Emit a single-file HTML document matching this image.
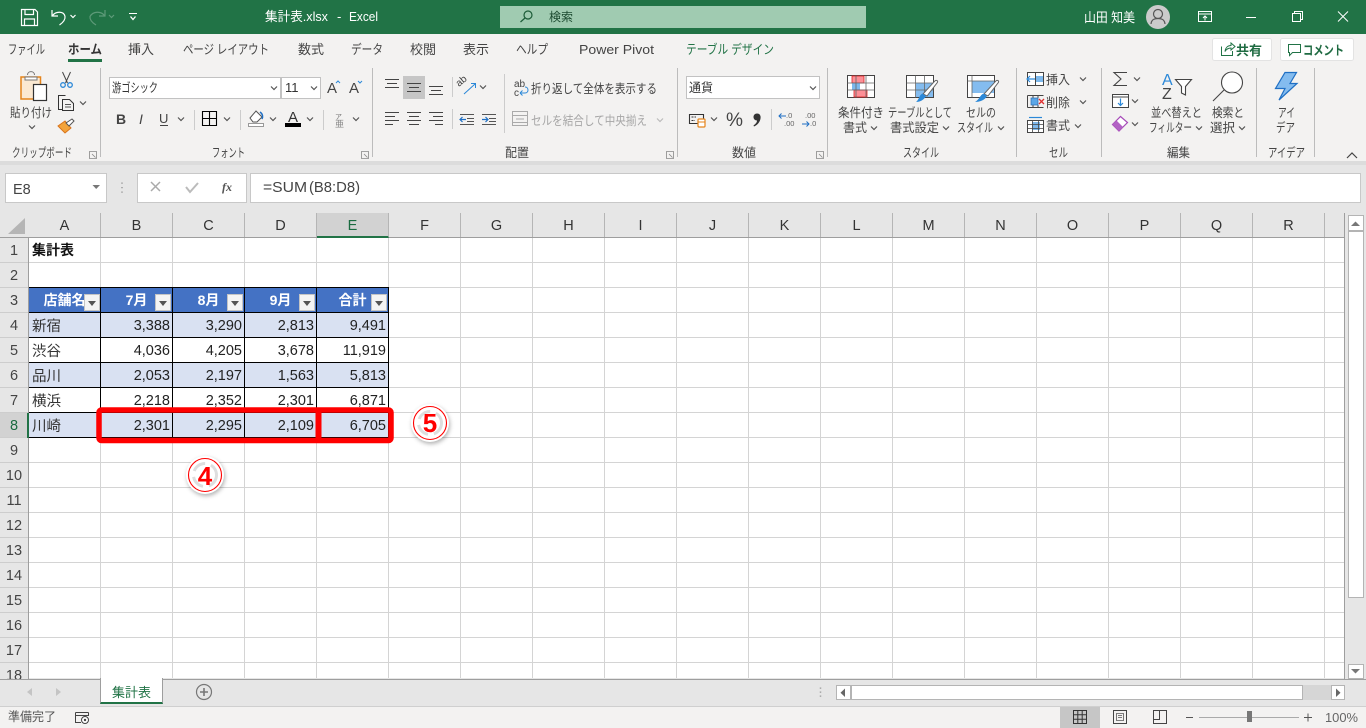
<!DOCTYPE html>
<html lang="ja">
<head>
<meta charset="utf-8">
<title>集計表.xlsx - Excel</title>
<style>
html,body{margin:0;padding:0;width:1366px;height:728px;overflow:hidden;background:#e6e6e6;font-family:"Liberation Sans","Noto Sans CJK JP",sans-serif}
#title{position:absolute;left:0;top:0;width:1366px;height:34px;background:#217346}
#ribbon{position:absolute;left:0;top:34px;width:1366px;height:127px;background:#f3f2f1}
#shade{position:absolute;left:0;top:161px;width:1366px;height:4px;background:#dcdcdc}
#sheetbg{position:absolute;left:29px;top:238px;width:1315px;height:440px;background-color:#fff;background-image:linear-gradient(to right,transparent 71px,#d4d4d4 71px),linear-gradient(to bottom,transparent 24px,#d4d4d4 24px);background-size:72px 100%,100% 25px}
#tabs{position:absolute;left:0;top:679px;width:1366px;height:27px;background:#e6e6e6;border-top:1px solid #9e9e9e;box-sizing:border-box}
#status{position:absolute;left:0;top:706px;width:1366px;height:22px;background:#f3f2f1;border-top:1px solid #cfcfcf;box-sizing:border-box}
.box{position:absolute;background:#fff;border:1px solid #c8c8c8;box-sizing:border-box}
.c{position:absolute;box-sizing:border-box;height:24px;line-height:26px;font-size:14.5px;color:#222;white-space:nowrap;overflow:hidden;width:71px}
.n{text-align:right;padding-right:2px}
.j{padding-left:3px;line-height:28px;color:#333}
.band{background:#d9e1f2}
.h{background:#4472c4;color:#fff;font-weight:bold;text-align:center;font-size:14px;line-height:24px}
.f{position:absolute;width:16px;height:17px;background:#f4f4f4;border:1px solid #c4c4c4;box-sizing:border-box}
.f:after{content:"";position:absolute;left:3px;top:6px;border:4px solid transparent;border-top:5px solid #555;border-bottom:0}
.ch{position:absolute;top:213px;height:24px;line-height:26px;width:72px;text-align:center;font-size:14.5px;color:#333;box-sizing:border-box;border-right:1px solid #b5b5b5}
.rh{position:absolute;left:0;width:28px;height:25px;line-height:26px;text-align:center;font-size:14.5px;color:#444;box-sizing:border-box;border-bottom:1px solid #cdcdcd}
svg{position:absolute;left:0;top:0;overflow:visible}
svg text{font-family:"Liberation Sans","Noto Sans CJK JP",sans-serif;font-size:12.5px;fill:#444}
svg text.t{font-size:13px}
</style>
</head>
<body>
<div id="title"></div>
<div id="ribbon"></div>
<div id="shade"></div>

<!-- name + formula -->
<div class="box" style="left:5px;top:173px;width:102px;height:30px"></div>
<div class="box" style="left:137px;top:173px;width:110px;height:30px"></div>
<div class="box" style="left:250px;top:173px;width:1111px;height:30px"></div>

<!-- column headers -->
<div style="position:absolute;left:0;top:213px;width:1345px;height:25px;background:#e6e6e6;border-bottom:1px solid #9e9e9e;box-sizing:border-box"></div>
<div class="ch" style="left:29px">A</div><div class="ch" style="left:101px">B</div><div class="ch" style="left:173px">C</div><div class="ch" style="left:245px">D</div>
<div class="ch" style="left:317px;background:#d2d2d2;color:#1a6b40;border-bottom:2px solid #217346;height:25px">E</div>
<div class="ch" style="left:389px">F</div><div class="ch" style="left:461px">G</div><div class="ch" style="left:533px">H</div><div class="ch" style="left:605px">I</div><div class="ch" style="left:677px">J</div><div class="ch" style="left:749px">K</div><div class="ch" style="left:821px">L</div><div class="ch" style="left:893px">M</div><div class="ch" style="left:965px">N</div><div class="ch" style="left:1037px">O</div><div class="ch" style="left:1109px">P</div><div class="ch" style="left:1181px">Q</div><div class="ch" style="left:1253px">R</div>

<!-- row headers -->
<div style="position:absolute;left:0;top:238px;width:29px;height:441px;background:#e6e6e6;border-right:1px solid #9e9e9e;box-sizing:border-box;overflow:hidden">
<div class="rh" style="top:0">1</div><div class="rh" style="top:25px">2</div><div class="rh" style="top:50px">3</div><div class="rh" style="top:75px">4</div><div class="rh" style="top:100px">5</div><div class="rh" style="top:125px">6</div><div class="rh" style="top:150px">7</div>
<div class="rh" style="top:175px;background:#d2d2d2;color:#1a6b40">8</div>
<div class="rh" style="top:200px">9</div><div class="rh" style="top:225px">10</div><div class="rh" style="top:250px">11</div><div class="rh" style="top:275px">12</div><div class="rh" style="top:300px">13</div><div class="rh" style="top:325px">14</div><div class="rh" style="top:350px">15</div><div class="rh" style="top:375px">16</div><div class="rh" style="top:400px">17</div><div class="rh" style="top:425px">18</div>
</div>
<div style="position:absolute;left:27px;top:413px;width:2px;height:25px;background:#217346"></div>

<!-- sheet -->
<div id="sheetbg"></div>
<div class="c j" style="left:29px;top:238px;font-weight:bold;font-size:14px;padding-left:3px;line-height:24px;color:#111">集計表</div>

<div class="c h" style="left:29px;top:288px">店舗名</div>
<div class="c h" style="left:101px;top:288px">7月</div>
<div class="c h" style="left:173px;top:288px">8月</div>
<div class="c h" style="left:245px;top:288px">9月</div>
<div class="c h" style="left:317px;top:288px">合計</div>

<div class="c j band" style="left:29px;top:313px">新宿</div><div class="c n band" style="left:101px;top:313px">3,388</div><div class="c n band" style="left:173px;top:313px">3,290</div><div class="c n band" style="left:245px;top:313px">2,813</div><div class="c n band" style="left:317px;top:313px">9,491</div>
<div class="c j" style="left:29px;top:338px;background:#fff">渋谷</div><div class="c n" style="left:101px;top:338px;background:#fff">4,036</div><div class="c n" style="left:173px;top:338px;background:#fff">4,205</div><div class="c n" style="left:245px;top:338px;background:#fff">3,678</div><div class="c n" style="left:317px;top:338px;background:#fff">11,919</div>
<div class="c j band" style="left:29px;top:363px">品川</div><div class="c n band" style="left:101px;top:363px">2,053</div><div class="c n band" style="left:173px;top:363px">2,197</div><div class="c n band" style="left:245px;top:363px">1,563</div><div class="c n band" style="left:317px;top:363px">5,813</div>
<div class="c j" style="left:29px;top:388px;background:#fff">横浜</div><div class="c n" style="left:101px;top:388px;background:#fff">2,218</div><div class="c n" style="left:173px;top:388px;background:#fff">2,352</div><div class="c n" style="left:245px;top:388px;background:#fff">2,301</div><div class="c n" style="left:317px;top:388px;background:#fff">6,871</div>
<div class="c j band" style="left:29px;top:413px">川崎</div><div class="c n band" style="left:101px;top:413px">2,301</div><div class="c n band" style="left:173px;top:413px">2,295</div><div class="c n band" style="left:245px;top:413px">2,109</div><div class="c n band" style="left:317px;top:413px">6,705</div>

<!-- table borders -->
<svg width="1366" height="728" viewBox="0 0 1366 728">
<path d="M29 287.5H389M29 312.5H389M29 337.5H389M29 362.5H389M29 387.5H389M29 412.5H389M29 437.5H389M100.500 287V438M172.500 287V438M244.500 287V438M316.500 287V438M388.500 287V438" fill="none" stroke="#000" stroke-width="1"/>
</svg>
<div class="f" style="left:84px;top:294px"></div>
<div class="f" style="left:155px;top:294px"></div>
<div class="f" style="left:227px;top:294px"></div>
<div class="f" style="left:299px;top:294px"></div>
<div class="f" style="left:371px;top:294px"></div>

<!-- scrollbars and bottom bars -->
<div style="position:absolute;left:1344px;top:213px;width:1px;height:466px;background:#9e9e9e"></div>
<div style="position:absolute;left:1345px;top:213px;width:21px;height:466px;background:#e6e6e6"></div>
<div class="box" style="left:1348px;top:215px;width:16px;height:16px;border-color:#b4b4b4"></div>
<div class="box" style="left:1348px;top:231px;width:16px;height:367px;border-color:#b4b4b4"></div>
<div class="box" style="left:1348px;top:664px;width:16px;height:15px;border-color:#b4b4b4"></div>
<div id="tabs"></div>
<div style="position:absolute;left:100px;top:678px;width:63px;height:26px;background:#fff;border:1px solid #9e9e9e;border-top:0;border-bottom:2px solid #217346;box-sizing:border-box"></div>
<div style="position:absolute;left:836px;top:685px;width:509px;height:15px;background:#d6d6d6"></div>
<div class="box" style="left:836px;top:685px;width:15px;height:15px;border-color:#b4b4b4"></div>
<div class="box" style="left:851px;top:685px;width:452px;height:15px;border-color:#b4b4b4"></div>
<div class="box" style="left:1331px;top:685px;width:14px;height:15px;border-color:#b4b4b4"></div>
<div id="status"></div>
<div style="position:absolute;left:1060px;top:707px;width:40px;height:21px;background:#c6c6c6"></div>

<!-- chrome icons + text -->
<svg width="1366" height="728" viewBox="0 0 1366 728">
<defs>
<path id="cv" d="M-3-1.500 0 1.500 3-1.500" fill="none" stroke="#555" stroke-width="1.200"/>
</defs>

<!-- title bar -->
<g fill="none" stroke="#fff" stroke-width="1.200">
<path d="M21.500 9.500H35L37.500 12V25.500H21.500Z"/><path d="M25 9.500V14.500H33.500V9.500M24.500 25.500V19H34.500V25.500"/>
<path d="M52 10V16H58M52.500 15.500C56 11 64 11 65 16.500C65.500 20 63 22.500 59.500 25"/>
<path d="M70.500 15 73 17.500 75.500 15"/>
</g>
<g fill="none" stroke="#5e9a79" stroke-width="1.200">
<path d="M105 10V16H99M104.500 15.500C101 11 93 11 90 16.500C89.500 20 92 22.500 96 25"/>
<path d="M109 15 111.500 17.500 114 15"/>
</g>
<path d="M129 13.500H137" stroke="#fff" fill="none"/><path d="M130.500 16.500 133 19.500 135.500 16.500" stroke="#fff" stroke-width="1.300" fill="none"/>
<text x="265" y="21" style="fill:#fff;font-size:13px" textLength="63" lengthAdjust="spacingAndGlyphs">集計表.xlsx</text>
<text x="337" y="21" style="fill:#fff;font-size:13px">-</text>
<text x="349" y="21" style="fill:#fff;font-size:13px" textLength="29" lengthAdjust="spacingAndGlyphs">Excel</text>
<rect x="500" y="6" width="366" height="22" fill="#a0cbb1"/>
<circle cx="528" cy="15" r="4" fill="none" stroke="#1c5c38" stroke-width="1.200"/><path d="M525 18 520.500 22" stroke="#1c5c38" stroke-width="1.200"/>
<text x="549" y="21" style="fill:#1c4a30;font-size:12px">検索</text>
<text x="1084" y="22" style="fill:#fff;font-size:13px" textLength="51" lengthAdjust="spacingAndGlyphs">山田 知美</text>
<circle cx="1158" cy="17" r="12" fill="#cbcbcb"/>
<circle cx="1158" cy="14" r="4.500" fill="none" stroke="#555" stroke-width="1.200"/><path d="M1151 24C1151.500 19 1155 18.500 1158 18.500S1164.500 19 1165 24" fill="none" stroke="#555" stroke-width="1.200"/>
<g fill="none" stroke="#fff" stroke-width="1">
<path d="M1198.500 11.500H1211.500V21.500H1198.500ZM1198.500 14H1211.500M1205 20.500V16M1203 18 1205 16 1207 18"/>
<path d="M1246 17.500H1256"/>
<path d="M1292.500 13.500H1300.500V21.500H1292.500ZM1294.500 13.500V11.500H1302.500V19.500H1300.500"/>
<path d="M1338 11.500 1348 21.500M1348 11.500 1338 21.500"/>
</g>

<!-- ribbon tabs -->
<text class="t" x="8" y="54" textLength="37" lengthAdjust="spacingAndGlyphs">ファイル</text>
<text class="t" x="68" y="54" textLength="34" lengthAdjust="spacingAndGlyphs" style="font-weight:bold;fill:#333">ホーム</text>
<rect x="68" y="59" width="34" height="3" fill="#217346"/>
<text class="t" x="128" y="54" textLength="26" lengthAdjust="spacingAndGlyphs">挿入</text>
<text class="t" x="183" y="54" textLength="86" lengthAdjust="spacingAndGlyphs">ページ レイアウト</text>
<text class="t" x="298" y="54" textLength="26" lengthAdjust="spacingAndGlyphs">数式</text>
<text class="t" x="351" y="54" textLength="32" lengthAdjust="spacingAndGlyphs">データ</text>
<text class="t" x="410" y="54" textLength="26" lengthAdjust="spacingAndGlyphs">校閲</text>
<text class="t" x="463" y="54" textLength="26" lengthAdjust="spacingAndGlyphs">表示</text>
<text class="t" x="516" y="54" textLength="32" lengthAdjust="spacingAndGlyphs">ヘルプ</text>
<text class="t" x="579" y="54" textLength="75" lengthAdjust="spacingAndGlyphs">Power Pivot</text>
<text class="t" x="686" y="54" style="fill:#217346" textLength="88" lengthAdjust="spacingAndGlyphs">テーブル デザイン</text>

<!-- share/comment -->
<rect x="1212.500" y="38.500" width="59" height="22" rx="2" fill="#fff" stroke="#e3e3e3"/>
<path d="M1221.500 46.500V55.500H1232.500V51M1225 51.500C1225.500 47.500 1228 45.500 1231 45.500V43L1235 46.500 1231 50V48C1228.500 48 1226.500 49 1225 51.500Z" fill="none" stroke="#217346"/>
<text x="1236" y="55" textLength="26" lengthAdjust="spacingAndGlyphs" style="font-weight:bold;fill:#1f6b42;font-size:13px">共有</text>
<rect x="1280.500" y="38.500" width="73" height="22" rx="2" fill="#fff" stroke="#e3e3e3"/>
<path d="M1288.500 44.500H1300.500V52.500H1292.500L1289.500 55.500V52.500H1288.500Z" fill="none" stroke="#217346"/>
<text x="1303" y="55" textLength="41" lengthAdjust="spacingAndGlyphs" style="font-weight:bold;fill:#1f6b42;font-size:13px">コメント</text>

<!-- group dividers -->
<path d="M100.500 68V157M372.500 68V157M677.500 68V157M827.500 68V157M1016.500 68V157M1101.500 68V157M1256.500 68V157M1314.500 68V157" stroke="#bcbcbc"/>

<!-- group labels -->
<text x="12" y="157" textLength="60" lengthAdjust="spacingAndGlyphs">クリップボード</text>
<text x="212" y="157" textLength="33" lengthAdjust="spacingAndGlyphs">フォント</text>
<text x="505" y="157" textLength="24" lengthAdjust="spacingAndGlyphs">配置</text>
<text x="732" y="157" textLength="24" lengthAdjust="spacingAndGlyphs">数値</text>
<text x="903" y="157" textLength="36" lengthAdjust="spacingAndGlyphs">スタイル</text>
<text x="1049" y="157" textLength="19" lengthAdjust="spacingAndGlyphs">セル</text>
<text x="1167" y="157" textLength="23" lengthAdjust="spacingAndGlyphs">編集</text>
<text x="1268" y="157" textLength="37" lengthAdjust="spacingAndGlyphs">アイデア</text>
<g fill="none" stroke="#888" stroke-width=".8">
<path d="M89.500 151.500H96.500V158.500H89.500ZM92 154 95.500 157.500"/>
<path d="M361.500 151.500H368.500V158.500H361.500ZM364 154 367.500 157.500"/>
<path d="M666.500 151.500H673.500V158.500H666.500ZM669 154 672.500 157.500"/>
<path d="M816.500 151.500H823.500V158.500H816.500ZM819 154 822.500 157.500"/>
</g>
<path d="M1347 158 1352 153 1357 158" fill="none" stroke="#444" stroke-width="1.200"/>

<!-- clipboard -->
<path d="M21 77H40.500V99H21Z" fill="#fbe9d2" stroke="#e5841b" stroke-width="1.500"/>
<path d="M25 77H37V80H25Z" fill="#fff" stroke="#777"/><path d="M27.500 75C27.500 70.500 34.500 70.500 34.500 75" fill="#f3f2f1" stroke="#777"/>
<rect x="33.500" y="84.500" width="13" height="16" fill="#fff" stroke="#333" stroke-width="1.200"/>
<text x="10" y="117" textLength="42" lengthAdjust="spacingAndGlyphs">貼り付け</text>
<use href="#cv" x="32" y="127"/>
<!-- cut -->
<path d="M62.500 72 67.500 83M70.500 72 65.500 83" stroke="#444" fill="none"/>
<circle cx="63" cy="85" r="2.300" fill="none" stroke="#2b88d8" stroke-width="1.300"/><circle cx="70" cy="85" r="2.300" fill="none" stroke="#2b88d8" stroke-width="1.300"/>
<!-- copy -->
<path d="M61.500 95.500H65.500M61.500 95.500H58.500V109.500H62" fill="none" stroke="#333"/>
<path d="M62.500 99.500H69.500L73.500 103.500V110.500H62.500Z" fill="#f3f2f1" stroke="#333"/><path d="M65 104.500H71M65 107H71" stroke="#555"/>
<use href="#cv" x="83" y="103"/>
<!-- brush -->
<path d="M58 126 65 121 71 128 65 133Z" fill="#f3a33a" stroke="#d9731a"/>
<path d="M66 123 72 119 74 121 69 126Z" fill="#fff" stroke="#555"/>

<!-- font -->
<rect x="109.500" y="77.500" width="171" height="21" fill="#fff" stroke="#c2c2c2"/>
<rect x="281.500" y="77.500" width="39" height="21" fill="#fff" stroke="#c2c2c2"/>
<text x="112" y="92" textLength="46" lengthAdjust="spacingAndGlyphs" style="fill:#333">游ゴシック</text>
<text x="285" y="92" style="font-size:13px;fill:#333">11</text>
<use href="#cv" x="274" y="88"/><use href="#cv" x="314" y="88"/>
<text x="327" y="93" style="font-size:15px">A</text><path d="M336 83 338 81 340 83" fill="none" stroke="#2b88d8"/>
<text x="349" y="93" style="font-size:15px">A</text><path d="M358 81 360 83 362 81" fill="none" stroke="#2b88d8"/>
<text x="116" y="124" style="font-weight:bold;font-size:14px">B</text>
<text x="139" y="124" style="font-style:italic;font-size:14px">I</text>
<text x="159" y="123" style="font-size:13px">U</text><path d="M160 125.500H168" stroke="#444"/>
<use href="#cv" x="181" y="119"/>
<path d="M194.500 110V130M240.500 110V130M323.500 110V130" stroke="#ccc"/>
<path d="M202.500 111.500H216.500V125.500H202.500ZM209.500 111.500V125.500M202.500 118.500H216.500" fill="none" stroke="#000" stroke-width="1.100"/>
<use href="#cv" x="227" y="119"/>
<path d="M250 118 256 111 262 117 257 122H253Z" fill="#fff" stroke="#555"/><path d="M260 112C263 114 263 117 262 119" fill="none" stroke="#1f6fc4" stroke-width="1.500"/>
<rect x="248.500" y="123.500" width="15" height="3" fill="#fff" stroke="#999"/>
<use href="#cv" x="273" y="119"/>
<text x="293" y="122" text-anchor="middle" style="font-size:15px;fill:#333">A</text>
<rect x="285" y="123" width="16" height="4" fill="#000"/>
<use href="#cv" x="310" y="119"/>
<text x="335" y="119" style="font-size:7px;fill:#777">ア</text><text x="335" y="127" style="font-size:9px;fill:#888">亜</text>
<use href="#cv" x="356" y="119"/>

<!-- alignment -->
<rect x="403" y="76" width="22" height="23" fill="#c6c6c6"/>
<g stroke="#444" fill="none">
<path d="M385 79.500H399M387 83.500H397M385 87.500H399"/>
<path d="M407 83.500H421M409 87.500H419M407 91.500H421"/>
<path d="M429 86.500H443M431 90.500H441M429 94.500H443"/>
<path d="M385 112.500H399M385 116.500H395M385 120.500H399M385 124.500H393"/>
<path d="M407 112.500H421M409 116.500H419M407 120.500H421M409 124.500H419"/>
<path d="M429 112.500H443M433 116.500H443M429 120.500H443M435 124.500H443"/>
<path d="M460 114.500H474M467 118.500H474M467 121.500H474M460 124.500H474" stroke="#555"/>
<path d="M482 114.500H496M489 118.500H496M489 121.500H496M482 124.500H496" stroke="#555"/>
</g>
<path d="M452.500 77V97M452.500 109V129M504.500 74V133" stroke="#ccc"/>
<text x="459" y="87" transform="rotate(-40 459 87)" style="font-size:10px">ab</text>
<path d="M464 94 475 84M471 83.500H475.500V88" stroke="#2b88d8" fill="none"/>
<use href="#cv" x="483" y="87"/>
<path d="M460 119.500H466M462.500 117 460 119.500 462.500 122M482 119.500H488M485.500 117 488 119.500 485.500 122" stroke="#1f6fc4" fill="none" stroke-width="1.200"/>
<text x="514" y="87" style="font-size:10px">ab</text><text x="514" y="96" style="font-size:10px">c</text>
<path d="M520 93H525C529 93 529 87 525 87M520 93 522.500 90.500M520 93 522.500 95.500" fill="none" stroke="#2b88d8"/>
<text x="531" y="93" textLength="126" lengthAdjust="spacingAndGlyphs">折り返して全体を表示する</text>
<path d="M512.500 111.500H527.500V125.500H512.500ZM512.500 115.500H527.500M512.500 122.500H527.500M516 119H524" fill="none" stroke="#aaa"/>
<text x="531" y="125" textLength="116" lengthAdjust="spacingAndGlyphs" style="fill:#a6a6a6">セルを結合して中央揃え</text>
<path d="M657 118.500 660 121.500 663 118.500" fill="none" stroke="#bbb" stroke-width="1.200"/>

<!-- number -->
<rect x="686.500" y="76.500" width="133" height="22" fill="#fff" stroke="#c2c2c2"/>
<text x="689" y="92" textLength="24" lengthAdjust="spacingAndGlyphs" style="fill:#333">通貨</text>
<use href="#cv" x="813" y="88"/>
<path d="M689.500 114.500H703.500V123.500H689.500Z" fill="none" stroke="#333" stroke-width="1.100"/>
<path d="M691.500 117H696M691.500 120.500H695" stroke="#333" stroke-width="1" fill="none" stroke-dasharray="2 1"/>
<rect x="698" y="119" width="7" height="8" rx="1" fill="#fff" stroke="#e5841b" stroke-width="1.200"/>
<path d="M698 122H705" stroke="#e5841b"/>
<use href="#cv" x="714" y="119"/>
<text x="726" y="126" style="font-size:19px;fill:#444" textLength="17" lengthAdjust="spacingAndGlyphs">%</text>
<path d="M757 113.500C760 113.500 761 116 760.500 118.500C760 122 757.500 125 754 126.500L753.500 125.500C755.500 124 757 122.500 757 120.500C755 120.500 753.500 119 753.500 117C753.500 115 755 113.500 757 113.500Z" fill="#333"/>
<path d="M771.500 109V130" stroke="#ccc"/>
<text x="786" y="118" style="font-size:7.500px;fill:#666">.0</text><text x="784" y="126" style="font-size:7.500px;fill:#666">.00</text>
<path d="M779 116H786M781.500 113.500 779 116 781.500 118.500" fill="none" stroke="#1f6fc4"/>
<text x="805" y="118" style="font-size:7.500px;fill:#666">.00</text><text x="810" y="126" style="font-size:7.500px;fill:#666">.0</text>
<path d="M802 124H809M806.500 121.500 809 124 806.500 126.500" fill="none" stroke="#1f6fc4"/>

<!-- conditional formatting -->
<path d="M847.500 75.500H874.500V97.500H847.500Z" fill="#fff" stroke="#444"/>
<rect x="852" y="76" width="12" height="7" fill="#fd8f96" stroke="#d22" stroke-width=".8"/>
<rect x="852" y="83" width="8" height="7" fill="#7db8ec"/>
<rect x="854" y="90" width="13" height="7" fill="#fd8f96" stroke="#d22" stroke-width=".8"/>
<path d="M847.500 83H874.500M847.500 90H874.500M856 75.500V97.500M866 75.500V97.500" stroke="#666" stroke-width=".8"/>
<text x="838" y="117" textLength="46" lengthAdjust="spacingAndGlyphs">条件付き</text>
<text x="843" y="132" textLength="24" lengthAdjust="spacingAndGlyphs">書式</text>
<use href="#cv" x="874" y="128"/>
<!-- format as table -->
<rect x="906.500" y="75.500" width="27" height="22" fill="#fff" stroke="#444"/>
<rect x="916" y="83" width="17" height="14" fill="#84bcef"/>
<path d="M906.500 83H933.500M906.500 90H933.500M915.500 75.500V97.500M924.500 75.500V97.500" stroke="#666" stroke-width=".8"/>
<path d="M923 94 934 82C936 79 939 81 937 83L927 96Z" fill="#fff" stroke="#666"/><path d="M916 102C920 102 924 100 926 96L922.500 93.500C919 95 919 100 916 102Z" fill="#2b88d8"/>
<text x="888" y="117" textLength="64" lengthAdjust="spacingAndGlyphs">テーブルとして</text>
<text x="890" y="132" textLength="49" lengthAdjust="spacingAndGlyphs">書式設定</text>
<use href="#cv" x="946" y="128"/>
<!-- cell styles -->
<rect x="967.500" y="75.500" width="27" height="22" fill="#fff" stroke="#444"/>
<rect x="972" y="81" width="22" height="12" fill="#84bcef"/>
<path d="M967.500 81H994.500M972 75.500V97.500" stroke="#666" stroke-width=".8"/>
<path d="M984 94 995 82C997 79 1000 81 998 83L988 96Z" fill="#fff" stroke="#666"/><path d="M975 102C980 102 985 100 987 96L983.500 93.500C980 95 979 100 975 102Z" fill="#2b88d8"/>
<text x="966" y="117" textLength="30" lengthAdjust="spacingAndGlyphs">セルの</text>
<text x="957" y="132" textLength="36" lengthAdjust="spacingAndGlyphs">スタイル</text>
<use href="#cv" x="1001" y="128"/>

<!-- cells group -->
<path d="M1027.500 72.500H1043.500V85.500H1027.500ZM1027.500 79H1043.500M1035.500 72.500V85.500" fill="#fff" stroke="#444"/>
<rect x="1036" y="76" width="7" height="6" fill="#7db8ec"/>
<path d="M1027 79H1035M1030 76 1027 79 1030 82" fill="none" stroke="#2b88d8" stroke-width="1.200"/>
<text x="1046" y="84" textLength="24" lengthAdjust="spacingAndGlyphs">挿入</text>
<use href="#cv" x="1083" y="79"/>
<path d="M1027.500 95.500H1043.500M1027.500 107.500H1043.500M1027.500 95.500V107.500M1033 95.500V98M1038 95.500V98M1033 105V107.500M1038 105V107.500" fill="none" stroke="#444"/>
<rect x="1031" y="98" width="7" height="7" fill="#5ba6e6" stroke="#2b6cb0" stroke-width=".7"/>
<path d="M1039 99 1044 104M1044 99 1039 104" stroke="#e03030" stroke-width="1.300"/>
<text x="1046" y="107" textLength="24" lengthAdjust="spacingAndGlyphs">削除</text>
<use href="#cv" x="1083" y="102"/>
<path d="M1027.500 120.500H1043.500V132.500H1027.500Z" fill="#fff" stroke="#444"/>
<rect x="1032" y="122" width="8" height="8" fill="#7db8ec"/>
<path d="M1027.500 124.500H1043.500M1027.500 128.500H1043.500M1032.500 120.500V132.500M1038.500 120.500V132.500" stroke="#444" stroke-width=".8"/>
<path d="M1029 117.500H1042" stroke="#2b88d8" stroke-width="1.200"/>
<text x="1046" y="130" textLength="24" lengthAdjust="spacingAndGlyphs">書式</text>
<use href="#cv" x="1078" y="126"/>

<!-- editing -->
<path d="M1127 72.500H1114L1121 79 1114 85.500H1127" fill="none" stroke="#444" stroke-width="1.100"/>
<use href="#cv" x="1137" y="79"/>
<rect x="1112.500" y="94.500" width="16" height="13" fill="#fff" stroke="#444"/><path d="M1112.500 97H1128.500" stroke="#444"/>
<path d="M1120.500 98.500V105.500M1118 103 1120.500 105.500 1123 103" fill="none" stroke="#2b88d8" stroke-width="1.200"/>
<use href="#cv" x="1135" y="101"/>
<path d="M1112.500 124.500 1120.500 116.500 1127.500 122.500 1119 131Z" fill="#fff" stroke="#a64ab8" stroke-width="1.200"/><path d="M1112.500 124.500 1116.500 120.500 1123 127 1119 131Z" fill="#b262c4"/>
<use href="#cv" x="1135" y="124"/>
<text x="1162" y="85" style="font-size:16px;fill:#2b88d8">A</text>
<text x="1162" y="99" style="font-size:16px;fill:#444">Z</text>
<path d="M1175.500 79.500H1191.500L1185.500 86.500V95L1181.500 93V86.500Z" fill="#fff" stroke="#444" stroke-width="1.100"/>
<text x="1151" y="117" textLength="51" lengthAdjust="spacingAndGlyphs">並べ替えと</text>
<text x="1149" y="132" textLength="43" lengthAdjust="spacingAndGlyphs">フィルター</text>
<use href="#cv" x="1199" y="128"/>
<circle cx="1232" cy="82.500" r="10.500" fill="#fff" stroke="#444" stroke-width="1.100"/>
<path d="M1224 90 1213 101" stroke="#444" stroke-width="1.100"/>
<text x="1212" y="117" textLength="32" lengthAdjust="spacingAndGlyphs">検索と</text>
<text x="1210" y="132" textLength="25" lengthAdjust="spacingAndGlyphs">選択</text>
<use href="#cv" x="1242" y="128"/>
<path d="M1285 72.500H1296.500L1290 83.500H1297L1279 100 1285 88.500H1275.500Z" fill="#84bcef" stroke="#1f6fc4" stroke-width="1.200"/>
<text x="1278" y="117" textLength="17" lengthAdjust="spacingAndGlyphs">アイ</text>
<text x="1276" y="132" textLength="19" lengthAdjust="spacingAndGlyphs">デア</text>

<!-- formula bar -->
<text x="13" y="194" style="font-size:14.500px">E8</text>
<path d="M92.500 185H100L96.200 189Z" fill="#777"/>
<path d="M122 182.500V183.800M122 187V188.300M122 191.500V192.800" stroke="#999" stroke-width="1.500"/>
<path d="M151 182 160 191M160 182 151 191" stroke="#aaa" stroke-width="1.500" fill="none"/>
<path d="M186 187 190 192 198 183" stroke="#bbb" stroke-width="2" fill="none"/>
<text x="222" y="191" style="font-family:'Liberation Serif',serif;font-style:italic;font-weight:bold;font-size:12px;fill:#555">fx</text>
<text x="263" y="192" style="font-size:15px" textLength="44" lengthAdjust="spacingAndGlyphs">=SUM</text>
<text x="309" y="192" style="font-size:15px" textLength="51" lengthAdjust="spacingAndGlyphs">(B8:D8)</text>

<!-- header corner -->
<path d="M25 218V234H8Z" fill="#b5b5b5"/>

<!-- scroll arrows -->
<path d="M1351 226H1360L1355.500 221.500Z" fill="#777"/>
<path d="M1351 669H1360L1355.500 673.500Z" fill="#777"/>
<path d="M845 688.500V697L840.500 692.700Z" fill="#666"/>
<path d="M1336 688.500V697L1340.500 692.700Z" fill="#666"/>
<path d="M820.500 687.500V688.800M820.500 691.500V692.800M820.500 695.500V696.800" stroke="#999" stroke-width="1.500"/>

<!-- sheet tabs -->
<path d="M32 688V696L27 692ZM56 688V696L61 692Z" fill="#c4c4c4"/>
<text x="112" y="697" textLength="39" lengthAdjust="spacingAndGlyphs" style="fill:#217346;font-size:13px">集計表</text>
<circle cx="204" cy="692" r="7.500" fill="none" stroke="#777" stroke-width="1.200"/>
<path d="M200 692H208M204 688V696" stroke="#777" stroke-width="1.600"/>

<!-- status bar -->
<text x="8" y="721" textLength="48" lengthAdjust="spacingAndGlyphs" style="fill:#555">準備完了</text>
<path d="M75.500 712.500H88.500M75.500 715.500H88.500M75.500 712.500V722.500H81M88.500 712.500V716" fill="none" stroke="#444"/>
<circle cx="85" cy="720" r="3.500" fill="#fff" stroke="#444"/><circle cx="85" cy="720" r="1.200" fill="#444"/>
<path d="M1073.500 710.500H1086.500V723.500H1073.500ZM1077.800 710.500V723.500M1082.200 710.500V723.500M1073.500 714.800H1086.500M1073.500 719.200H1086.500" fill="none" stroke="#333"/>
<path d="M1113.500 710.500H1126.500V723.500H1113.500Z" fill="none" stroke="#444"/><path d="M1116.500 713.500H1123.500V720.500H1116.500ZM1118 715.500H1122M1118 717.500H1122" fill="none" stroke="#555" stroke-width=".8"/>
<path d="M1153.500 710.500H1166.500V723.500H1153.500ZM1153.500 719.500H1159.500V710.500" fill="none" stroke="#444"/>
<path d="M1186 717.500H1193M1304 717.500H1312M1308 713.500V721.500" stroke="#555"/>
<path d="M1199 717.500H1299" stroke="#aaa"/>
<rect x="1247" y="711" width="5" height="11" fill="#777"/>
<text x="1325" y="722" style="font-size:13px;fill:#666" textLength="33" lengthAdjust="spacingAndGlyphs">100%</text>

<!-- red callouts -->
<rect x="99" y="410" width="292" height="30.500" rx="2.500" fill="none" stroke="#ff0000" stroke-width="5.500"/>
<rect x="315.500" y="410" width="6" height="30" fill="#ff0000"/>
<g style="filter:drop-shadow(1px 2px 2px rgba(0,0,0,.3))">
<circle cx="430" cy="423" r="19" fill="#fff"/>
<circle cx="205" cy="475" r="19" fill="#fff"/>
</g>
<circle cx="430" cy="423" r="11.500" fill="none" stroke="#dedede" stroke-width="3" stroke-dasharray="14 6"/>
<circle cx="205" cy="475" r="11.500" fill="none" stroke="#dedede" stroke-width="3" stroke-dasharray="14 6"/>
<circle cx="430" cy="423" r="16.500" fill="none" stroke="#ff0000" stroke-width="1.100"/>
<circle cx="205" cy="475" r="16.500" fill="none" stroke="#ff0000" stroke-width="1.100"/>
<text x="430" y="432" text-anchor="middle" style="font-size:26px;font-weight:bold;fill:#ff0000">5</text>
<text x="205" y="485" text-anchor="middle" style="font-size:26px;font-weight:bold;fill:#ff0000">4</text>
</svg>
</body>
</html>
